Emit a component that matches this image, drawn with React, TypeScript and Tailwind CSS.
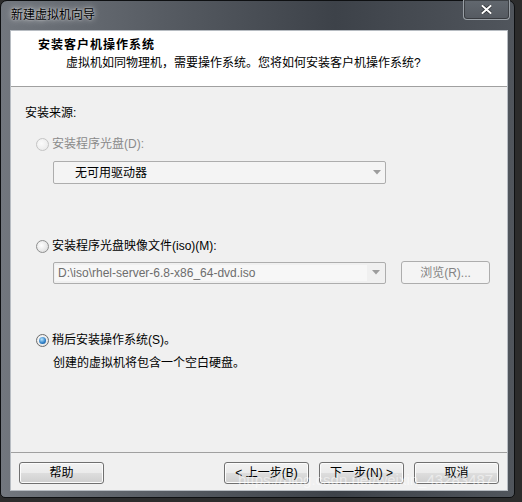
import React from "react";

const FONT = { fontFamily: '"Liberation Sans","Noto Sans CJK SC",sans-serif' };

function Radio({ state }: { state: "disabled" | "off" | "on" }) {
  if (state === "disabled") {
    return (
      <span className="w-[13px] h-[13px] rounded-full border border-[#c4c4c4] bg-[radial-gradient(circle_at_40%_40%,#fbfbfb,#e6e6e6)] shrink-0" />
    );
  }
  if (state === "off") {
    return (
      <span className="w-[13px] h-[13px] rounded-full border border-[#8e8f8f] bg-[radial-gradient(circle_at_40%_40%,#ffffff,#d6d6d6)] shrink-0" />
    );
  }
  return (
    <span className="w-[13px] h-[13px] rounded-full border border-[#6c6c6c] bg-[radial-gradient(circle_at_40%_40%,#ffffff,#dcdcdc)] shrink-0 flex items-center justify-center">
      <span className="w-[7px] h-[7px] rounded-full bg-[radial-gradient(circle_at_40%_35%,#b8e6ff,#2a7bc4_60%,#124c85)]" />
    </span>
  );
}

function Arrow({ color }: { color: string }) {
  return (
    <svg width="8" height="5" viewBox="0 0 8 5">
      <path d="M0 0H8L4 4.5Z" fill={color} />
    </svg>
  );
}

function WinButton({ children, className = "" }: { children: React.ReactNode; className?: string }) {
  return (
    <div
      className={
        "h-[22px] w-[85px] rounded-[3px] border border-[#707070] bg-[linear-gradient(180deg,#f2f2f2_0%,#ebebeb_48%,#dddddd_52%,#cfcfcf_100%)] shadow-[inset_0_0_0_1px_#fcfcfc] flex items-center justify-center text-[12px] text-black leading-[16px] " +
        className
      }
    >
      {children}
    </div>
  );
}

export default function App() {
  return (
    <div className="w-[522px] h-[502px] bg-[#2c2c2c] overflow-hidden relative" style={FONT}>
      <div className="w-[515px] h-[498px] rounded-t-[7px] rounded-b-[5px] border border-[#0e1012] bg-[linear-gradient(90deg,#72777e_0%,#545960_35%,#3d4249_65%,#50555c_100%)] flex flex-col">
        {/* Title bar */}
        <div className="h-[29px] flex items-start justify-between shrink-0">
          <div className="pl-[10px] pt-[6px] text-[12px] leading-[16px] text-black [text-shadow:0_0_6px_rgba(255,255,255,0.9),0_0_2px_rgba(255,255,255,0.6)]">
            新建虚拟机向导
          </div>
          <div className="mr-[4px] -mt-[1px] w-[47px] h-[20px] rounded-b-[4px] border border-t-0 border-[#9aa0a6] bg-[linear-gradient(180deg,#62686f,#555a61)] shadow-[inset_0_0_0_1px_rgba(0,0,0,0.35)] flex items-center justify-center">
            <svg width="11" height="9" viewBox="0 0 11 9">
              <path d="M1.5 1L9.5 8M9.5 1L1.5 8" stroke="#2a2d31" strokeWidth="3.4" strokeLinecap="square" />
              <path d="M1.5 1L9.5 8M9.5 1L1.5 8" stroke="#ffffff" strokeWidth="2" strokeLinecap="square" />
            </svg>
          </div>
        </div>

        {/* Client area */}
        <div className="ml-[9px] w-[498px] h-[461px] border border-[#b7bcc2] bg-[#f0f0f0] flex flex-col shrink-0">
          {/* Header */}
          <div className="h-[56px] bg-white border-b border-[#a0a0a0] shrink-0">
            <div className="pl-[27px] pt-[6px] text-[12px] leading-[16px] font-bold tracking-[1px] text-black">
              安装客户机操作系统
            </div>
            <div className="pl-[55px] mt-[2px] text-[12px] leading-[16px] text-black">
              虚拟机如同物理机，需要操作系统。您将如何安装客户机操作系统?
            </div>
          </div>

          {/* Content */}
          <div className="h-[365px] pl-[14px] pt-[18px] flex flex-col shrink-0 text-[12px] leading-[16px]">
            <div className="text-black">安装来源:</div>

            <div className="mt-[15px] ml-[11px] flex items-center gap-[3px] h-[16px]">
              <Radio state="disabled" />
              <span className="text-[#8a8a8a]">安装程序光盘(D):</span>
            </div>

            <div className="mt-[9px] ml-[28px] w-[333px] h-[23px] rounded-[2px] border border-[#adadad] bg-[#f4f4f4] flex items-center">
              <span className="pl-[21px] flex-1 text-black">无可用驱动器</span>
              <span className="w-[17px] flex items-center justify-center">
                <Arrow color="#9c9c9c" />
              </span>
            </div>

            <div className="mt-[54px] ml-[11px] flex items-center gap-[3px] h-[16px]">
              <Radio state="off" />
              <span className="text-black">安装程序光盘映像文件(iso)(M):</span>
            </div>

            <div className="mt-[7px] ml-[28px] flex items-center">
              <div className="w-[333px] h-[22px] rounded-[2px] border border-[#adadad] bg-[#f0f0f0] flex items-stretch">
                <div className="w-[312px] my-[2px] ml-[1px] bg-[#f7f7f7] pl-[3px] flex items-center text-[#6d6d6d] whitespace-nowrap overflow-hidden">
                  D:\iso\rhel-server-6.8-x86_64-dvd.iso
                </div>
                <div className="flex-1 flex items-center justify-center">
                  <Arrow color="#9c9c9c" />
                </div>
              </div>
              <div className="ml-[15px] w-[89px] h-[23px] rounded-[3px] border border-[#adadad] bg-[#f4f4f4] flex items-center justify-center text-[#838383]">
                浏览(R)...
              </div>
            </div>

            <div className="mt-[48px] ml-[11px] flex items-center gap-[3px] h-[16px]">
              <Radio state="on" />
              <span className="text-black">稍后安装操作系统(S)。</span>
            </div>

            <div className="mt-[7px] ml-[28px] text-black">创建的虚拟机将包含一个空白硬盘。</div>
          </div>

          {/* Separator */}
          <div className="h-px bg-[#a0a0a0] shrink-0" />

          {/* Buttons */}
          <div className="mt-[9px] px-[8px] flex items-center">
            <WinButton>帮助</WinButton>
            <div className="flex-1" />
            <div className="flex gap-[10px]">
              <WinButton>&lt; 上一步(B)</WinButton>
              <WinButton>下一步(N) &gt;</WinButton>
              <WinButton>取消</WinButton>
            </div>
          </div>
        </div>
      </div>

      {/* Watermark */}
      <div className="absolute left-[238px] top-[471px] text-[15px] leading-[18px] text-white/50 whitespace-nowrap pointer-events-none" style={{ fontFamily: '"Liberation Sans",sans-serif' }}>
        https://blog.csdn.net/weixin_43283487
      </div>
    </div>
  );
}
